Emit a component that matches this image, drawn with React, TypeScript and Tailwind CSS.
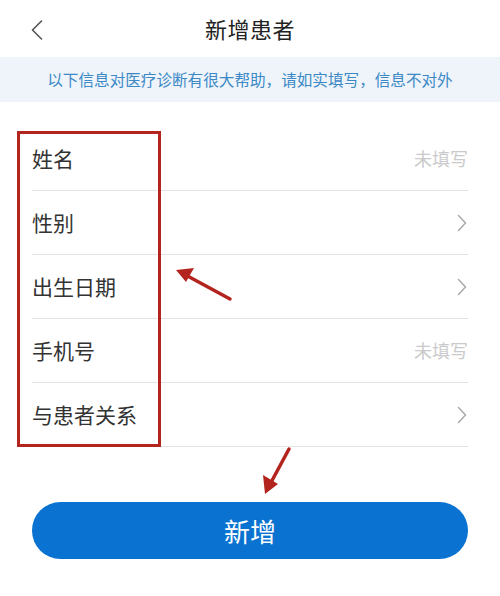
import React from "react";

type Field = {
  label: string;
  kind: "input" | "select";
};

const fields: Field[] = [
  { label: "姓名", kind: "input" },
  { label: "性别", kind: "select" },
  { label: "出生日期", kind: "select" },
  { label: "手机号", kind: "input" },
  { label: "与患者关系", kind: "select" },
];

const ChevronLeft = () => (
  <svg width="12" height="20" viewBox="0 0 12 20" fill="none">
    <path d="M10.5 1 L1.5 10 L10.5 19" stroke="#555" strokeWidth="1.6" strokeLinecap="round" strokeLinejoin="round" />
  </svg>
);

const ChevronRight = () => (
  <svg width="10" height="18" viewBox="0 0 10 18" fill="none">
    <path d="M1.5 1.5 L8.5 9 L1.5 16.5" stroke="#a8a8a8" strokeWidth="1.4" strokeLinecap="round" strokeLinejoin="round" />
  </svg>
);

// hand-drawn style pointers laid over the form
const Annotations = () => (
  <svg className="pointer-events-none absolute inset-0" width="500" height="596" viewBox="0 0 500 596">
    <g stroke="#b3241f" strokeWidth="3.5" strokeLinecap="round" fill="none">
      <path d="M230 299 L182 273" />
      <path d="M289 449 L268 488" />
    </g>
    <g fill="#b3241f">
      <path d="M176 270 L194 268 L186 282 Z" />
      <path d="M265 494 L263 475 L278 484 Z" />
    </g>
  </svg>
);

export default function App() {
  return (
    <div
      className="relative w-[500px] h-[596px] bg-white overflow-hidden"
      style={{ fontFamily: '"Noto Sans CJK SC", "Noto Sans", sans-serif' }}
    >
      {/* Header */}
      <div className="relative flex items-center justify-center h-[57px]">
        <button className="absolute left-[31px] top-[20px] flex items-center">
          <ChevronLeft />
        </button>
        <h1 className="text-[22px] text-[#222] tracking-[0.5px]">新增患者</h1>
      </div>

      {/* Notice */}
      <div className="flex items-center justify-center h-[45px] bg-[#eef4fa]">
        <p className="text-[15.6px] text-[#3c89c6]">以下信息对医疗诊断有很大帮助，请如实填写，信息不对外</p>
      </div>

      {/* Form */}
      <div className="mt-[25px] mx-8 flex flex-col">
        {fields.map((f) => (
          <div
            key={f.label}
            className="flex items-center justify-between h-[64px] border-b border-[#e3e3e3]"
          >
            <span className="text-[21px] text-[#333]">{f.label}</span>
            {f.kind === "input" ? (
              <span className="text-[18px] text-[#cacaca]">未填写</span>
            ) : (
              <span className="pr-[1px]">
                <ChevronRight />
              </span>
            )}
          </div>
        ))}
      </div>

      {/* Submit */}
      <div className="mx-8 mt-[55px]">
        <button className="w-full h-[57px] rounded-full bg-[#0a72d0] text-white text-[26px] flex items-center justify-center">
          新增
        </button>
      </div>

      {/* Highlight box over labels */}
      <div className="absolute left-[17px] top-[131px] w-[144px] h-[316px] border-[3px] border-[#b3241f]" />
      <Annotations />
    </div>
  );
}
